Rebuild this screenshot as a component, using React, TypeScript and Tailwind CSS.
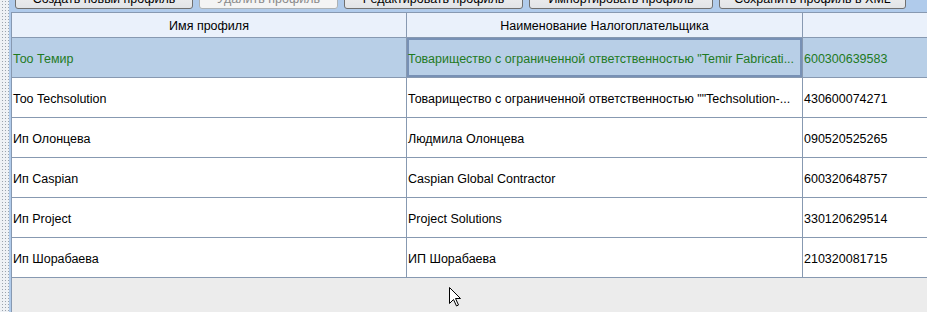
import React from "react";

const rows = [
  { name: "Тоо Темир", payer: "Товарищество с ограниченной ответственностью \"Temir Fabricati...", bin: "600300639583", selected: true },
  { name: "Тоо Techsolution", payer: "Товарищество с ограниченной ответственностью \"\"Techsolution-...", bin: "430600074271" },
  { name: "Ип Олонцева", payer: "Людмила Олонцева", bin: "090520525265" },
  { name: "Ип Caspian", payer: "Caspian Global Contractor", bin: "600320648757" },
  { name: "Ип Project", payer: "Project Solutions", bin: "330120629514" },
  { name: "Ип Шорабаева", payer: "ИП Шорабаева", bin: "210320081715" },
];

const buttons = [
  { label: "Создать новый профиль", w: "w-[178px]", disabled: false },
  { label: "Удалить профиль", w: "w-[139px]", disabled: true },
  { label: "Редактировать профиль", w: "w-[179px]", disabled: false },
  { label: "Импортировать профиль", w: "w-[184px]", disabled: false },
  { label: "Сохранить профиль в XML", w: "w-[187px]", disabled: false },
];

export default function App() {
  return (
    <div
      className="relative flex w-[927px] h-[312px] overflow-hidden text-[12.5px] leading-none text-black"
      style={{ fontFamily: '"Liberation Sans", Arial, sans-serif' }}
    >
      <div className="w-[9px] h-full bg-[#eef1f5] bg-[radial-gradient(circle,#9aa3ad_0.7px,transparent_0.9px)] bg-[length:3px_3px] bg-[position:1px_0px]" />
      <div className="flex-1 flex flex-col bg-[#b0cbeb] pl-[2px] min-w-0">
        <div className="h-[12px] flex gap-[6px] pl-[4px] shrink-0 overflow-visible">
          {buttons.map((b) => (
            <div
              key={b.label}
              className={
                "h-[20px] -mt-[11px] shrink-0 flex items-center justify-center rounded-[3px] border whitespace-nowrap " +
                b.w +
                (b.disabled
                  ? " border-[#adb2b5] bg-[#f4f4f4] text-[#8a8a8a]"
                  : " border-[#707070] bg-[linear-gradient(#f2f2f2,#e2e4e7)] text-black")
              }
            >
              {b.label}
            </div>
          ))}
        </div>
        <div className="flex-1 flex flex-col border-l border-t border-[#8799b1] bg-[#ececec]">
          <div className="h-[25px] flex shrink-0 bg-[#eaf1fb] border-b border-[#8799b1]">
            <div className="w-[395px] shrink-0 border-r border-[#8799b1] flex items-center justify-center pt-[3px]">Имя профиля</div>
            <div className="w-[396px] shrink-0 border-r border-[#8799b1] flex items-center justify-center pt-[3px]">Наименование Налогоплательщика</div>
            <div className="flex-1" />
          </div>
          {rows.map((r) => (
            <div
              key={r.bin}
              className={
                "h-[40px] flex shrink-0 border-b border-[#8799b1] " +
                (r.selected ? "bg-[#b8cfe7] text-[#1f7a1f]" : "bg-white text-black")
              }
            >
              <div className="w-[395px] shrink-0 border-r border-[#8799b1] flex items-center pl-[1px] pt-[3px] whitespace-nowrap overflow-hidden">
                {r.name}
              </div>
              <div
                className={
                  "w-[396px] shrink-0 border-r border-[#8799b1] flex items-center pl-[1px] pt-[3px] whitespace-nowrap overflow-hidden " +
                  (r.selected ? "shadow-[inset_0_0_0_2px_#7891b5]" : "")
                }
              >
                {r.payer}
              </div>
              <div className="flex-1 flex items-center pl-[1px] pt-[3px] whitespace-nowrap">{r.bin}</div>
            </div>
          ))}
          <div className="flex-1" />
        </div>
      </div>
      <svg className="absolute left-[449px] top-[287px]" width="13" height="20" viewBox="0 0 13 20">
        <path d="M0.5 0.5 L0.5 16.5 L4.5 12.5 L7.5 19 L9.5 18 L6.5 11.5 L11.5 11.5 Z" fill="#fff" stroke="#000" strokeWidth="1" strokeLinejoin="miter" />
      </svg>
    </div>
  );
}
